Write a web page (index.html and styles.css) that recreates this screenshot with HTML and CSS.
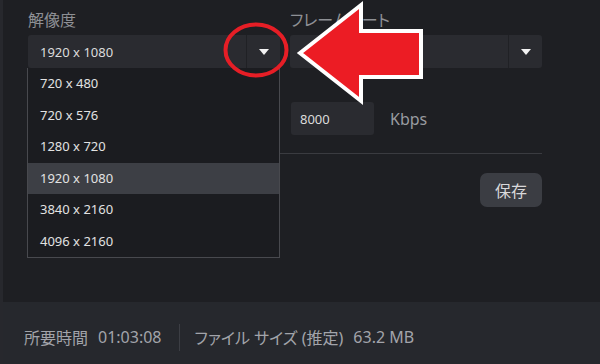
FILE: index.html
```html
<!DOCTYPE html>
<html lang="ja">
<head>
<meta charset="utf-8">
<link rel="stylesheet" href="styles.css">
</head>
<body>
<div class="app">
  <div class="main">
    <div class="grid">
      <div class="field">
        <div class="label">解像度</div>
        <div class="select">
          <span class="value">1920 x 1080</span>
          <span class="btn"><span class="tri"></span></span>
        </div>
        <ul class="dropdown">
          <li>720 x 480</li>
          <li>720 x 576</li>
          <li>1280 x 720</li>
          <li class="active">1920 x 1080</li>
          <li>3840 x 2160</li>
          <li>4096 x 2160</li>
        </ul>
      </div>
      <div class="field">
        <div class="label">フレームレート</div>
        <div class="select">
          <span class="value"></span>
          <span class="btn"><span class="tri"></span></span>
        </div>
      </div>
    </div>
    <div class="grid row2">
      <div></div>
      <div class="bitrate">
        <div class="input">8000</div>
        <span class="unit">Kbps</span>
      </div>
    </div>
    <div class="rule"></div>
    <div class="actions">
      <button class="save">保存</button>
    </div>
  </div>
  <div class="footer">
    <span class="k wide">所要時間</span>
    <span class="v">01:03:08</span>
    <span class="sep"></span>
    <span class="k">ファイル サイズ (推定)</span>
    <span class="v">63.2 MB</span>
  </div>
  <svg class="annot" width="600" height="364" viewBox="0 0 600 364">
    <ellipse cx="256" cy="50" rx="30.5" ry="25.5" fill="none" stroke="#e61e26" stroke-width="4"/>
    <polygon points="300,53 361,5 361,31 421,31 421,77 361,77 361,101" fill="#ec1c24" stroke="#ffffff" stroke-width="4" stroke-linejoin="miter"/>
  </svg>
</div>
</body>
</html>
```

FILE: styles.css
```css
* { box-sizing: border-box; }
html, body { margin: 0; padding: 0; }
body {
  width: 600px;
  height: 364px;
  overflow: hidden;
  background: #1e1f23;
  font-family: "Noto Sans", "Noto Sans CJK JP", sans-serif;
  font-feature-settings: "palt";
}
.app {
  position: relative;
  width: 600px;
  height: 364px;
  display: flex;
  flex-direction: column;
  border-left: 3px solid #27282d;
}
.main {
  flex: 1;
  padding: 10px 0 0 25px;
  width: 539px;
}
.grid {
  display: grid;
  grid-template-columns: 252px 252px;
  column-gap: 10px;
}
.field { position: relative; }
.label {
  font-size: 16px;
  line-height: 20px;
  color: #8e9095;
  margin-bottom: 5px;
  white-space: nowrap;
}
.select {
  height: 33px;
  background: #2a2b30;
  border-radius: 3px;
  display: flex;
  align-items: stretch;
}
.value {
  flex: 1;
  font-size: 13px;
  color: #dcdcdc;
  display: flex;
  align-items: center;
  padding-left: 12px;
}
.btn {
  width: 34px;
  border-left: 1px solid #202125;
  display: flex;
  align-items: center;
  justify-content: center;
}
.tri {
  width: 0;
  height: 0;
  border-left: 5px solid transparent;
  border-right: 5px solid transparent;
  border-top: 6px solid #f2f2f2;
}
.dropdown {
  position: absolute;
  left: -1px;
  top: 58px;
  width: 253px;
  margin: 0;
  padding: 0;
  list-style: none;
  background: #1b1c20;
  border: 1px solid #48494e;
  border-top: none;
  z-index: 5;
}
.dropdown li {
  height: 31.5px;
  line-height: 31.5px;
  font-size: 13px;
  color: #e2e2e2;
  padding-left: 12px;
}
.dropdown li.active { background: #3d3f45; }
.row2 { margin-top: 34px; }
.bitrate {
  display: flex;
  align-items: center;
  gap: 16px;
}
.input {
  width: 83px;
  height: 33px;
  background: #2a2b30;
  border-radius: 3px;
  font-size: 13px;
  color: #dcdcdc;
  padding-left: 9px;
  display: flex;
  align-items: center;
  margin-left: 1px;
}
.unit {
  font-size: 16px;
  color: #999ba0;
}
.rule {
  height: 1px;
  background: #3a3b40;
  margin-top: 18px;
}
.actions {
  display: flex;
  justify-content: flex-end;
  margin-top: 19px;
}
.save {
  width: 62px;
  height: 34px;
  border: none;
  border-radius: 7px;
  background: #3b3d43;
  color: #d8d8da;
  font-family: "Noto Sans CJK JP", sans-serif;
  font-size: 16px;
  padding: 0;
}
.footer {
  height: 62px;
  background: #26282d;
  display: flex;
  align-items: center;
  padding: 8px 0 0 21px;
  font-size: 16px;
  color: #a2a4aa;
  white-space: nowrap;
}
.footer .wide { font-feature-settings: normal; }
.footer .v { margin-left: 10px; }
.footer .sep {
  width: 1px;
  height: 27px;
  background: #3c3e44;
  margin: 0 15px 0 17px;
}
.annot {
  position: absolute;
  left: -3px;
  top: 0;
  z-index: 10;
  pointer-events: none;
}
```
